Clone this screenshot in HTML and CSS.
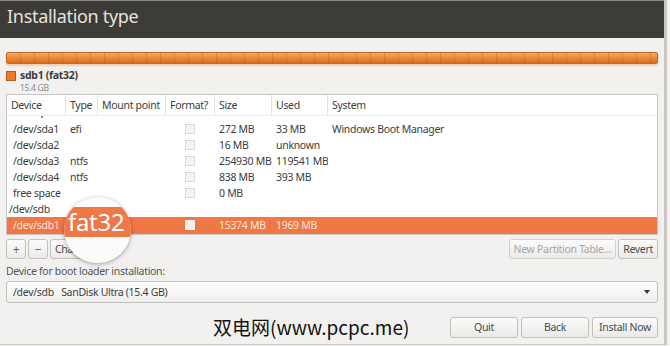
FILE: index.html
```html
<!DOCTYPE html>
<html lang="en">
<head>
    <meta charset="UTF-8">
    <title>Installation type</title>
    <link rel="stylesheet" href="styles.css">
</head>
<body>
    <div class="window">
        <div class="titlebar">Installation type</div>

        <div class="content">
            <!-- Barra de particiones -->
            <div class="disk-bar"></div>

            <div class="legend">
                <span class="swatch"></span>
                <div>
                    <div class="legend-name">sdb1 (fat32)</div>
                    <div class="legend-size">15.4 GB</div>
                </div>
            </div>

            <!-- Lista de particiones -->
            <div class="part-list">
                <div class="row head">
                    <div>Device</div><div>Type</div><div>Mount point</div><div>Format?</div><div>Size</div><div>Used</div><div>System</div>
                </div>
                <div class="rows">
                    <div class="row cut"><div class="dev"><span class="dot"></span></div></div>
                    <div class="row"><div class="dev">/dev/sda1</div><div>efi</div><div></div><div><span class="check"></span></div><div>272 MB</div><div>33 MB</div><div>Windows Boot Manager</div></div>
                    <div class="row"><div class="dev">/dev/sda2</div><div></div><div></div><div><span class="check"></span></div><div>16 MB</div><div>unknown</div><div></div></div>
                    <div class="row"><div class="dev">/dev/sda3</div><div>ntfs</div><div></div><div><span class="check"></span></div><div>254930 MB</div><div>119541 MB</div><div></div></div>
                    <div class="row"><div class="dev">/dev/sda4</div><div>ntfs</div><div></div><div><span class="check"></span></div><div>838 MB</div><div>393 MB</div><div></div></div>
                    <div class="row"><div class="dev">free space</div><div></div><div></div><div><span class="check"></span></div><div>0 MB</div><div></div><div></div></div>
                    <div class="row"><div class="disk">/dev/sdb</div></div>
                    <div class="row selected"><div class="dev">/dev/sdb1</div><div>fat32</div><div></div><div><span class="check"></span></div><div>15374 MB</div><div>1969 MB</div><div></div></div>
                </div>
            </div>

            <div class="toolbar">
                <div class="tools-left">
                    <button class="small">+</button>
                    <button class="small">&minus;</button>
                    <button class="change">Change...</button>
                </div>
                <div class="tools-right">
                    <button class="disabled">New Partition Table...</button>
                    <button>Revert</button>
                </div>
            </div>

            <div class="boot-label">Device for boot loader installation:</div>
            <div class="combo">
                <span>/dev/sdb&nbsp;&nbsp;&nbsp;SanDisk Ultra (15.4 GB)</span>
                <span class="arrow"></span>
            </div>

            <div class="footer">
                <div class="watermark">双电网(www.pcpc.me)</div>
                <div class="actions">
                    <button class="wide">Quit</button>
                    <button class="wide">Back</button>
                    <button>Install Now</button>
                </div>
            </div>

            <!-- Lupa sobre la fila seleccionada -->
            <div class="magnifier">
                <div class="mag-band">fat32</div>
            </div>
        </div>
    </div>
</body>
</html>
```

FILE: styles.css
```css
/* Ventana general */
body {
    margin: 0;
    font-family: 'Noto Sans', 'Open Sans', sans-serif;
    font-size: 10.5px;
    letter-spacing: -0.3px;
    color: #3c3c3c;
    background-color: #f2f1f0;
}

.window {
    width: 667px;
    height: 345px;
    border-right: 3px solid #c8c6c3;
    border-bottom: 1px solid #c8c6c3;
    background-color: #f2f1f0;
    box-sizing: border-box;
    overflow: hidden;
}

/* Barra de título */
.titlebar {
    height: 38px;
    background-color: #3c3b37;
    border-top: 1px solid #8a8985;
    box-sizing: border-box;
    color: #e6e3de;
    font-size: 18px;
    padding: 3px 0 0 7px;
    letter-spacing: -0.3px;
}

.content {
    position: relative;
    padding: 14px 6px 0 6px;
}

/* Barra de disco */
.disk-bar {
    height: 10px;
    border: 1px solid #c7661f;
    border-radius: 2px;
    background:
        repeating-linear-gradient(90deg, transparent 0 13px, rgba(180, 90, 30, 0.35) 13px 14px),
        linear-gradient(#f6a760, #ea8534 55%, #d86f22);
    box-shadow: 0 2px 2px rgba(230, 140, 70, 0.35);
}

.legend {
    display: flex;
    gap: 4px;
    margin-top: 5px;
}

.swatch {
    width: 8px;
    height: 8px;
    margin-top: 2px;
    background-color: #f07a2a;
    border: 1px solid #b85a1a;
}

.legend-name {
    font-weight: bold;
    font-size: 10.5px;
    line-height: 13px;
    color: #3c3c3c;
}

.legend-size {
    font-size: 8.5px;
    color: #8a8a8a;
    line-height: 11px;
}

/* Lista de particiones */
.part-list {
    margin-top: 1px;
    height: 141px;
    border: 1px solid #c9c7c4;
    background-color: #fff;
    box-sizing: border-box;
    overflow: hidden;
}

.row {
    display: grid;
    grid-template-columns: 59px 32px 68px 49px 57px 56px 1fr;
    height: 16px;
    line-height: 16px;
    white-space: nowrap;
}

.row > div {
    padding-left: 4px;
    overflow: hidden;
}

.row.head {
    height: 21px;
    line-height: 20px;
    border-bottom: 1px solid #ecebe9;
    box-sizing: border-box;
}

.row.head > div {
    border-right: 1px solid #e4e2df;
    padding-left: 4px;
}

.row.head > div:last-child {
    border-right: none;
}

.row.cut {
    height: 5px;
}

.dot {
    display: inline-block;
    width: 2px;
    height: 2px;
    margin-left: 28px;
    vertical-align: top;
    background-color: #888;
}

.row .dev {
    padding-left: 6px;
}

.row .disk {
    padding-left: 2px;
}

.check {
    display: inline-block;
    width: 8px;
    height: 8px;
    margin-left: 15px;
    border: 1px solid #d9d8d6;
    background-color: #f4f4f3;
    vertical-align: -1px;
}

.row.selected {
    height: 17px;
    background-color: #f07746;
    color: #fde7dc;
}

.row.selected .check {
    background-color: #f3f1ef;
    border-color: #f3f1ef;
}

/* Botones */
button {
    font-family: inherit;
    font-size: 10.5px;
    letter-spacing: -0.3px;
    color: #4a4a4a;
    height: 20px;
    padding: 0 4px;
    border: 1px solid #c3c1bd;
    border-radius: 3px;
    background: linear-gradient(#fbfbfa, #ebeae8);
    cursor: pointer;
}

button.disabled {
    color: #a8a7a4;
    border-color: #d3d1ce;
}

.toolbar {
    display: flex;
    justify-content: space-between;
    margin-top: 4px;
}

.tools-left,
.tools-right {
    display: flex;
    gap: 2px;
}

button.small {
    width: 20px;
    padding: 0;
    font-size: 12px;
    color: #666;
}

button.change {
    width: 60px;
    text-align: left;
}

.boot-label {
    margin-top: 5px;
    line-height: 14px;
    color: #555;
}

.combo {
    display: flex;
    justify-content: space-between;
    align-items: center;
    height: 22px;
    margin-top: 3px;
    padding: 0 7px 0 6px;
    border: 1px solid #c3c1bd;
    border-radius: 3px;
    background: linear-gradient(#fdfdfd, #f0efee);
    box-sizing: border-box;
    color: #3c3c3c;
}

.arrow {
    width: 0;
    height: 0;
    border-left: 3.5px solid transparent;
    border-right: 3.5px solid transparent;
    border-top: 4px solid #333;
}

/* Pie */
.footer {
    display: flex;
    justify-content: space-between;
    align-items: center;
    margin-top: 13px;
}

.watermark {
    margin-left: 207px;
    font-family: 'Noto Sans CJK SC', 'DejaVu Sans', sans-serif;
    font-size: 19px;
    line-height: 22px;
    color: #111;
    letter-spacing: 0;
}

.actions {
    display: flex;
    gap: 3px;
}

.actions button {
    height: 21px;
    padding: 0 6px;
}

.actions button.wide {
    width: 68px;
}

/* Lupa */
.magnifier {
    position: absolute;
    left: 64px;
    top: 159px;
    width: 67px;
    height: 66px;
    border-radius: 50%;
    background-color: #fbfbfa;
    box-shadow: 0 1px 4px rgba(0, 0, 0, 0.35);
    overflow: hidden;
}

.mag-band {
    margin-top: 10px;
    height: 30px;
    line-height: 30px;
    background-color: #f07746;
    color: #fff;
    font-size: 24px;
    padding-left: 4px;
    letter-spacing: -0.3px;
}
```
